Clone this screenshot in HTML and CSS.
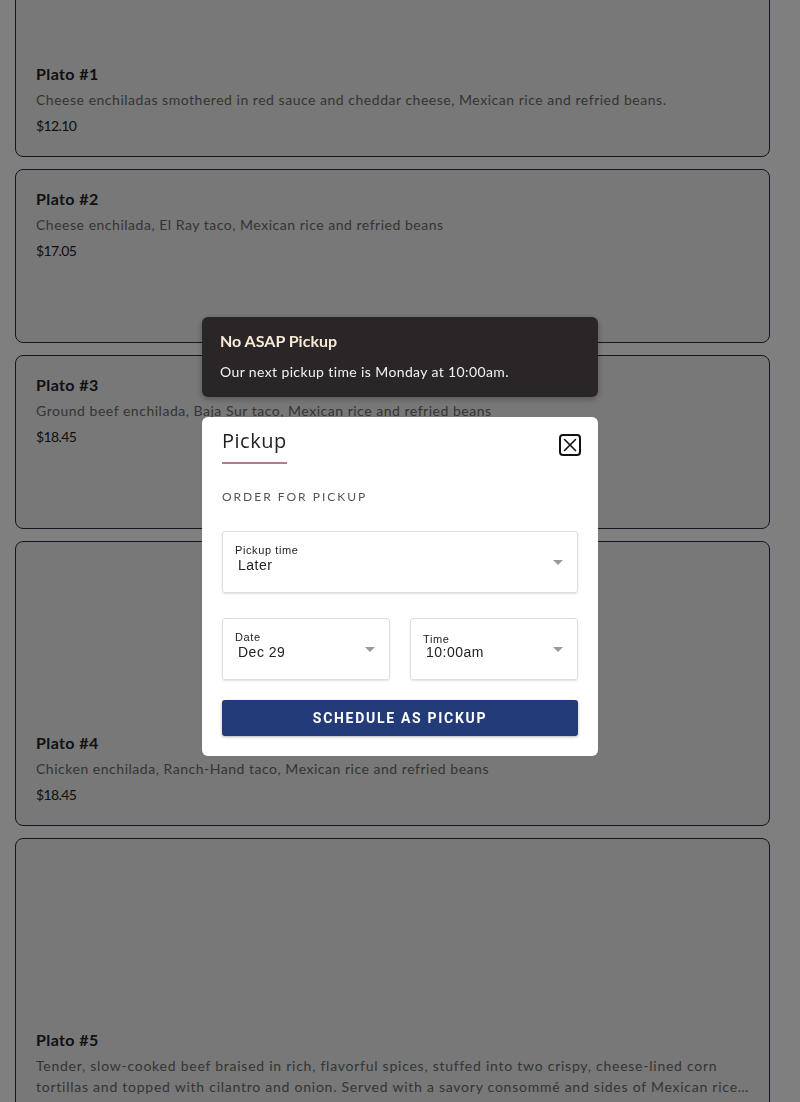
FILE: index.html
```html
<!DOCTYPE html>
<html lang="en">
<head>
<meta charset="utf-8">
<title>Pickup</title>
<link rel="stylesheet" href="styles.css">
</head>
<body>
<main class="menu">
  <article class="card">
    <div class="card-media"></div>
    <div class="card-body">
      <h3 class="card-title">Plato #1</h3>
      <p class="card-desc">Cheese enchiladas smothered in red sauce and cheddar cheese, Mexican rice and refried beans.</p>
      <p class="card-price">$12.10</p>
    </div>
  </article>
  <article class="card card--plain">
    <div class="card-body">
      <h3 class="card-title">Plato #2</h3>
      <p class="card-desc">Cheese enchilada, El Ray taco, Mexican rice and refried beans</p>
      <p class="card-price">$17.05</p>
    </div>
  </article>
  <article class="card card--plain">
    <div class="card-body">
      <h3 class="card-title">Plato #3</h3>
      <p class="card-desc">Ground beef enchilada, Baja Sur taco, Mexican rice and refried beans</p>
      <p class="card-price">$18.45</p>
    </div>
  </article>
  <article class="card">
    <div class="card-media"></div>
    <div class="card-body">
      <h3 class="card-title">Plato #4</h3>
      <p class="card-desc">Chicken enchilada, Ranch-Hand taco, Mexican rice and refried beans</p>
      <p class="card-price">$18.45</p>
    </div>
  </article>
  <article class="card">
    <div class="card-media"></div>
    <div class="card-body">
      <h3 class="card-title">Plato #5</h3>
      <p class="card-desc card-desc--clamp">Tender, slow-cooked beef braised in rich, flavorful spices, stuffed into two crispy, cheese-lined corn tortillas and topped with cilantro and onion. Served with a savory consommé and sides of Mexican rice and refried beans.</p>
      <p class="card-price">$19.95</p>
    </div>
  </article>
</main>

<div class="overlay">
  <div class="toast">
    <div class="toast-title">No ASAP Pickup</div>
    <div class="toast-text">Our next pickup time is Monday at 10:00am.</div>
  </div>
  <section class="modal">
    <header class="modal-head">
      <h2 class="modal-title">Pickup</h2>
      <button class="close" aria-label="Close">
        <svg width="22" height="22" viewBox="0 0 22 22">
          <rect x="1" y="1" width="20" height="20" rx="3" fill="none" stroke="#111" stroke-width="2"/>
          <path d="M5.5 5.5 L16.5 16.5 M16.5 5.5 L5.5 16.5" stroke="#111" stroke-width="1.6" stroke-linecap="round"/>
        </svg>
      </button>
    </header>
    <div class="section-label">ORDER FOR PICKUP</div>
    <div class="field">
      <span class="field-label">Pickup time</span>
      <span class="field-value">Later</span>
      <span class="caret"></span>
    </div>
    <div class="field-row">
      <div class="field">
        <span class="field-label">Date</span>
        <span class="field-value">Dec 29</span>
        <span class="caret"></span>
      </div>
      <div class="field">
        <span class="field-label field-label--low">Time</span>
        <span class="field-value field-value--up">10:00am</span>
        <span class="caret"></span>
      </div>
    </div>
    <button class="primary">SCHEDULE AS PICKUP</button>
  </section>
</div>
</body>
</html>
```

FILE: styles.css
```css
* { box-sizing: border-box; }
html, body { margin: 0; padding: 0; }
body {
  background: #ffffff;
  font-family: Lato, "Open Sans", sans-serif;
  color: #222;
  height: 1102px;
  overflow: hidden;
}

.menu {
  display: flex;
  flex-direction: column;
  gap: 12px;
  padding: 0 30px 0 15px;
  margin-top: -128px;
}

.card {
  background: #f0f0f0;
  border: 1px solid #2c2c44;
  border-radius: 8px;
}
.card-media { height: 172px; }
.card--plain .card-body { min-height: 172px; }
.card-body { padding: 20px 20px 20px 20px; }

.card-title {
  margin: 0;
  font-size: 16px;
  line-height: 18px;
  font-weight: 700;
  color: #222;
  letter-spacing: 0.4px;
}
.card-desc {
  margin: 6px 0 0;
  font-size: 14px;
  line-height: 21px;
  color: #6a6a6a;
  letter-spacing: 0.52px;
}
.card-desc--clamp {
  letter-spacing: 0.75px;
  display: -webkit-box;
  -webkit-line-clamp: 2;
  -webkit-box-orient: vertical;
  overflow: hidden;
}
.card-price {
  margin: 6px 0 0;
  font-size: 14px;
  line-height: 20px;
  color: #222;
  letter-spacing: -0.6px;
}

.overlay {
  position: fixed;
  inset: 0;
  background: rgba(0, 0, 0, 0.5);
  display: flex;
  flex-direction: column;
  align-items: center;
  padding-top: 317px;
  gap: 20px;
}

.toast {
  width: 396px;
  height: 80px;
  background: #2a2628;
  border-radius: 6px;
  padding: 14px 18px;
  box-shadow: 0 2px 6px rgba(0,0,0,0.3);
}
.toast-title {
  font-size: 16px;
  line-height: 20px;
  font-weight: 700;
  color: #f7e9d6;
}
.toast-text {
  margin-top: 11px;
  font-size: 14px;
  line-height: 20px;
  color: #f2f2f2;
  letter-spacing: 0.38px;
}

.modal {
  width: 396px;
  background: #ffffff;
  border-radius: 6px;
  padding: 12px 20px 20px;
}
.modal-head {
  display: flex;
  justify-content: space-between;
  align-items: flex-start;
}
.modal-title {
  margin: 0;
  font-family: "Open Sans", Lato, sans-serif;
  font-size: 20px;
  line-height: 24px;
  font-weight: 500;
  letter-spacing: 0.5px;
  color: #222;
  padding-bottom: 9px;
  border-bottom: 2px solid #b8798f;
}
.close {
  margin: 5px -3px 0 0;
  padding: 0;
  border: 0;
  background: none;
  width: 22px;
  height: 22px;
  display: block;
}
.close svg { display: block; }

.section-label {
  margin-top: 25px;
  font-size: 12px;
  line-height: 16px;
  letter-spacing: 2px;
  color: #555;
}

.field {
  position: relative;
  height: 62px;
  border: 1px solid #dedede;
  border-radius: 3px;
  box-shadow: 0 1px 2px rgba(0,0,0,0.12);
  padding: 11px 12px 0;
  font-family: "Liberation Sans", Arial, sans-serif;
}
.modal > .field { margin-top: 26px; }
.field-row {
  display: grid;
  grid-template-columns: 1fr 1fr;
  gap: 20px;
  margin-top: 25px;
}
.field-label {
  display: block;
  font-size: 11px;
  line-height: 14px;
  color: #222;
  letter-spacing: 0.6px;
}
.field-label--low { margin-top: 2px; }
.field-value {
  display: block;
  margin-left: 3px;
  font-size: 14px;
  line-height: 16px;
  color: #222;
  letter-spacing: 0.5px;
}
.field-value--up { margin-top: -2px; }
.caret {
  position: absolute;
  right: 14px;
  top: 28px;
  width: 0;
  height: 0;
  border-left: 5px solid transparent;
  border-right: 5px solid transparent;
  border-top: 5px solid #9a9a9a;
}

.primary {
  display: block;
  width: 100%;
  height: 36px;
  margin-top: 20px;
  border: 0;
  border-radius: 3px;
  background: #243b7a;
  color: #ffffff;
  font-family: Roboto, "Liberation Sans", sans-serif;
  font-weight: 700;
  font-size: 14px;
  letter-spacing: 1.7px;
  box-shadow: 0 1px 3px rgba(0,0,0,0.3);
}
```
